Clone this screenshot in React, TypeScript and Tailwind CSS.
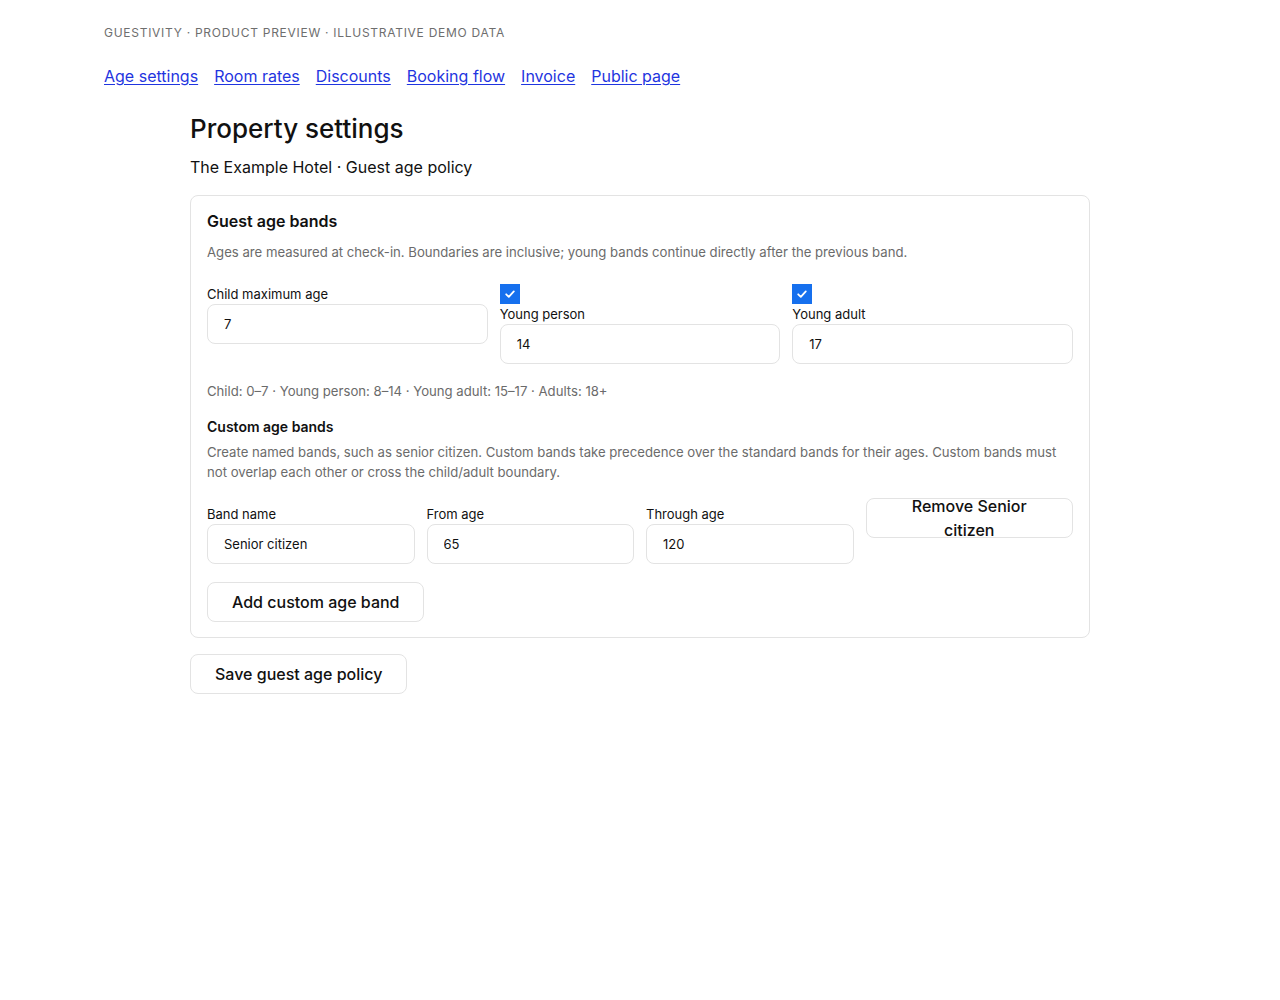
import React from 'react';

const FONT = { fontFamily: 'Inter, "Noto Sans", sans-serif' };

const inputCls =
  'h-10 w-full rounded-lg border border-[#e3e3e3] bg-white px-4 text-[13px] text-[#111] outline-none';

const Check = () => (
  <span className="flex h-5 w-5 items-center justify-center bg-[#1670ee]">
    <svg width="12" height="12" viewBox="0 0 12 12" fill="none">
      <path d="M2.2 6.3 4.8 8.8 9.8 3.4" stroke="white" strokeWidth="1.8" strokeLinecap="round" strokeLinejoin="round" />
    </svg>
  </span>
);

const Field: React.FC<{ label: string; value: string; checkbox?: boolean }> = ({ label, value, checkbox }) => (
  <div className="flex flex-col">
    {checkbox && <Check />}
    <label className="text-[13px] leading-5 text-[#111]">{label}</label>
    <input className={inputCls} value={value} readOnly />
  </div>
);

const Button: React.FC<{ children: React.ReactNode; className?: string }> = ({ children, className }) => (
  <button
    className={`inline-flex h-10 items-center justify-center rounded-lg border border-[#e3e3e3] bg-white px-6 text-base leading-6 font-medium text-[#111] ${className || ''}`}
  >
    {children}
  </button>
);

export default function App() {
  const links = ['Age settings', 'Room rates', 'Discounts', 'Booking flow', 'Invoice', 'Public page'];
  return (
    <div className="min-h-screen bg-white pt-[25px]" style={FONT}>
      <div className="mx-auto max-w-[1072px]">
        <p className="text-xs leading-4 tracking-[0.06em] text-[#6e6e6e] uppercase">
          Guestivity · Product preview · Illustrative demo data
        </p>
        <nav className="mt-[23px] flex gap-4 text-base leading-6">
          {links.map((l) => (
            <a key={l} href="#" className="text-[#1f35e0] underline underline-offset-2">
              {l}
            </a>
          ))}
        </nav>
      </div>

      <main className="mx-auto mt-[24px] max-w-[900px]">
        <h1 className="text-[26px] leading-[34px] font-medium text-[#111]">Property settings</h1>
        <p className="mt-[9px] text-base leading-6 text-[#111]">The Example Hotel · Guest age policy</p>

        <section className="mt-4 rounded-lg border border-[#e3e3e3] px-4 pt-[13px] pb-[15px]">
          <h2 className="text-base leading-6 font-semibold text-[#111]">Guest age bands</h2>
          <p className="mt-[9px] text-[13.15px] leading-5 text-[#6b6b6b]">
            Ages are measured at check-in. Boundaries are inclusive; young bands continue directly after the previous band.
          </p>

          <div className="mt-[22px] grid grid-cols-3 items-start gap-3">
            <Field label="Child maximum age" value="7" />
            <Field label="Young person" value="14" checkbox />
            <Field label="Young adult" value="17" checkbox />
          </div>

          <p className="mt-[17px] text-[13.15px] leading-5 text-[#6b6b6b]">
            Child: 0–7 · Young person: 8–14 · Young adult: 15–17 · Adults: 18+
          </p>

          <h3 className="mt-4 text-sm leading-5 font-semibold text-[#111]">Custom age bands</h3>
          <p className="mt-[5px] text-[13.15px] leading-5 text-[#6b6b6b]">
            Create named bands, such as senior citizen. Custom bands take precedence over the standard bands for their ages. Custom bands must not overlap each other or cross the child/adult boundary.
          </p>

          <div className="mt-4 grid grid-cols-4 items-start gap-3">
            <div className="pt-[6px]">
              <Field label="Band name" value="Senior citizen" />
            </div>
            <div className="pt-[6px]">
              <Field label="From age" value="65" />
            </div>
            <div className="pt-[6px]">
              <Field label="Through age" value="120" />
            </div>
            <Button className="w-full">Remove Senior citizen</Button>
          </div>

          <Button className="mt-[18px]">Add custom age band</Button>
        </section>

        <Button className="mt-4">Save guest age policy</Button>
      </main>
    </div>
  );
}
